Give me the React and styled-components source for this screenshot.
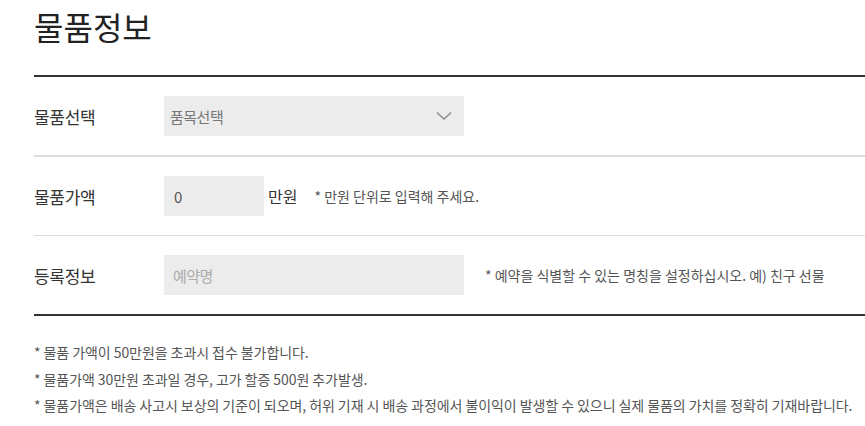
import React from "react";
import styled, { createGlobalStyle } from "styled-components";

const Global = createGlobalStyle`
  html, body { margin: 0; padding: 0; background: #fff; }
  body { font-family: "Noto Sans CJK KR", "Noto Sans", sans-serif; color: #333; }
`;

const Page = styled.div`
  padding-left: 34px;
`;

const Title = styled.h2`
  margin: 0;
  height: 75px;
  box-sizing: border-box;
  padding-top: 6px;
  font-size: 32px;
  font-weight: 400;
  line-height: 40px;
  color: #222;
  letter-spacing: 0;
`;

const Table = styled.div`
  border-top: 2px solid #333;
  border-bottom: 2px solid #333;
`;

const Row = styled.div`
  display: flex;
  align-items: center;
  height: 78px;
  box-sizing: content-box;
  border-top: ${(p) => (p.$first ? "none" : `${p.$sep}px solid #ddd`)};
`;

const Label = styled.div`
  width: 130px;
  flex: none;
  font-size: 17px;
  color: #333;
  letter-spacing: -0.3px;
`;

const Field = styled.div`
  display: flex;
  align-items: center;
  width: ${(p) => p.$w}px;
  height: 40px;
  flex: none;
  box-sizing: border-box;
  padding: 0 ${(p) => p.$pl}px 0 ${(p) => p.$pl}px;
  background: #ececec;
  font-size: ${(p) => p.$fs}px;
  color: ${(p) => p.$color};
  letter-spacing: -0.5px;
  justify-content: space-between;
`;

const Unit = styled.span`
  margin-left: 4px;
  font-size: 16px;
  color: #333;
`;

const Note = styled.span`
  margin-left: ${(p) => p.$ml}px;
  font-size: 14px;
  color: #555;
  letter-spacing: 0;
`;

const Notes = styled.ul`
  list-style: none;
  margin: 0;
  padding: 23px 0 0;
`;

const NoteItem = styled.li`
  font-size: 14px;
  line-height: 26.5px;
  color: #555;
  letter-spacing: -0.07px;
`;

const Chevron = () => (
  <svg width="16" height="10" viewBox="0 0 16 10" style={{ marginRight: 6 }}>
    <path d="M1 1.5 L8 8 L15 1.5" fill="none" stroke="#8a8a8a" strokeWidth="1.4" />
  </svg>
);

export default function App() {
  return (
    <Page>
      <Global />
      <Title>물품정보</Title>
      <Table>
        <Row $first>
          <Label>물품선택</Label>
          <Field $w={300} $pl={6} $fs={15} $color="#777">
            <span>품목선택</span>
            <Chevron />
          </Field>
        </Row>
        <Row $sep={2}>
          <Label>물품가액</Label>
          <Field $w={100} $pl={10} $fs={15} $color="#555">
            <span>0</span>
          </Field>
          <Unit>만원</Unit>
          <Note $ml={17}>* 만원 단위로 입력해 주세요.</Note>
        </Row>
        <Row $sep={1}>
          <Label>등록정보</Label>
          <Field $w={300} $pl={9} $fs={15} $color="#aaa">
            <span>예약명</span>
          </Field>
          <Note $ml={21}>* 예약을 식별할 수 있는 명칭을 설정하십시오. 예) 친구 선물</Note>
        </Row>
      </Table>
      <Notes>
        <NoteItem>* 물품 가액이 50만원을 초과시 접수 불가합니다.</NoteItem>
        <NoteItem>* 물품가액 30만원 초과일 경우, 고가 할증 500원 추가발생.</NoteItem>
        <NoteItem>* 물품가액은 배송 사고시 보상의 기준이 되오며, 허위 기재 시 배송 과정에서 불이익이 발생할 수 있으니 실제 물품의 가치를 정확히 기재바랍니다.</NoteItem>
      </Notes>
    </Page>
  );
}
